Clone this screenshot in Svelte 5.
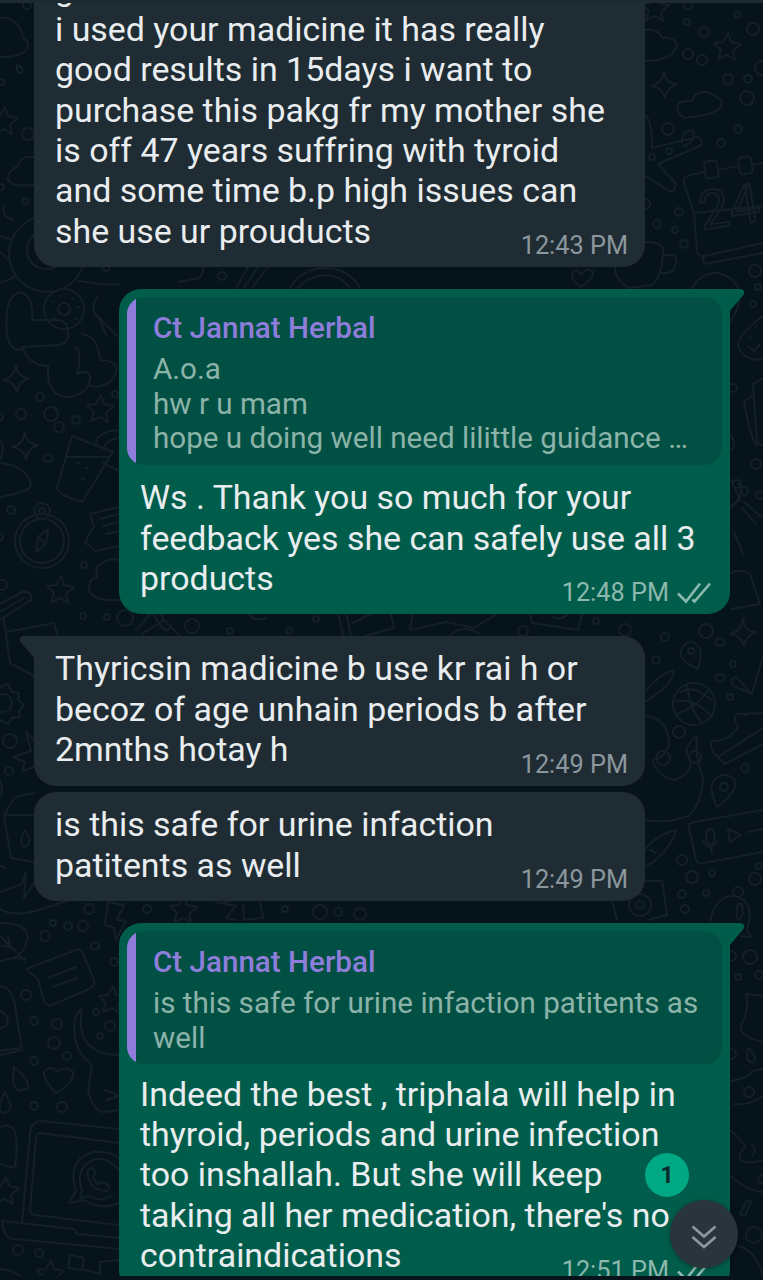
<script lang="ts">
	interface Quote {
		name: string;
		lines: string[];
	}

	interface Message {
		side: 'in' | 'out';
		lines: string[];
		time: string;
		tail?: boolean;
		compact?: boolean;
		quote?: Quote;
	}

	const messages: Message[] = [
		{
			side: 'in',
			lines: [
				'guidance',
				'i used your madicine it has really',
				'good results in 15days i want to',
				'purchase this pakg fr my mother she',
				'is off 47 years suffring with tyroid',
				'and some time b.p high issues can',
				'she use ur prouducts'
			],
			time: '12:43 PM'
		},
		{
			side: 'out',
			tail: true,
			quote: {
				name: 'Ct Jannat Herbal',
				lines: ['A.o.a', 'hw r u mam', 'hope u doing well need lilittle guidance …']
			},
			lines: ['Ws . Thank you so much for your', 'feedback yes she can safely use all 3', 'products'],
			time: '12:48 PM'
		},
		{
			side: 'in',
			tail: true,
			lines: ['Thyricsin madicine b use kr rai h or', 'becoz of age unhain periods b after', '2mnths hotay h'],
			time: '12:49 PM'
		},
		{
			side: 'in',
			lines: ['is this safe for urine infaction', 'patitents as well'],
			time: '12:49 PM'
		},
		{
			side: 'out',
			tail: true,
			compact: true,
			quote: {
				name: 'Ct Jannat Herbal',
				lines: ['is this safe for urine infaction patitents as', 'well']
			},
			lines: [
				'Indeed the best , triphala will help in',
				'thyroid, periods and urine infection',
				'too inshallah. But she will keep',
				"taking all her medication, there's no",
				'contraindications'
			],
			time: '12:51 PM'
		}
	];

	const unread = 1;

	// Wallpaper bubbles: x, y, radius
	const dots = [
		[27, 5, 4], [1, 82, 3], [28, 134, 6], [25, 201, 3], [1, 187, 3], [106, 268, 3], [222, 276, 4],
		[687, 22, 3], [704, 32, 5], [753, 29, 6], [737, 15, 3], [688, 5, 4], [688, 54, 5], [702, 60, 5],
		[728, 79, 5], [748, 79, 4], [762, 68, 7], [747, 98, 7], [668, 129, 6], [738, 129, 4], [721, 143, 4],
		[652, 157, 3], [669, 151, 3], [657, 224, 4], [675, 230, 3], [679, 212, 4], [684, 244, 4],
		[645, 204, 5], [755, 271, 6], [758, 287, 3], [753, 304, 3], [733, 388, 4], [756, 464, 5],
		[760, 495, 4], [40, 397, 4], [21, 414, 5], [51, 414, 7], [76, 420, 4], [59, 427, 5], [48, 458, 4],
		[115, 394, 3], [0, 417, 3], [11, 510, 4], [0, 537, 3], [84, 565, 3], [2, 585, 5], [83, 616, 3],
		[107, 617, 3], [125, 618, 8], [192, 626, 7], [230, 631, 3], [289, 631, 3], [316, 619, 3], [523, 631, 5],
		[596, 621, 3], [625, 630, 6], [665, 637, 4], [706, 631, 7], [720, 642, 4], [656, 660, 4],
		[733, 664, 3], [720, 678, 4], [730, 697, 3], [679, 732, 6], [745, 768, 4], [10, 741, 7],
		[9, 771, 4], [53, 923, 3], [68, 926, 4], [83, 926, 5], [45, 936, 5], [89, 909, 5], [147, 909, 4],
		[95, 946, 4], [114, 962, 4], [26, 995, 5], [34, 1021, 4], [57, 1024, 5], [54, 1043, 6],
		[67, 1056, 4], [34, 1061, 4], [34, 1106, 4], [62, 1107, 5], [96, 1012, 3], [110, 1026, 5],
		[100, 1036, 3], [18, 1250, 5], [39, 1253, 4], [285, 909, 3], [320, 912, 7], [338, 912, 4],
		[360, 914, 6], [682, 860, 5], [692, 877, 6], [712, 873, 3], [682, 894, 4], [706, 893, 3],
		[685, 909, 4], [755, 879, 6], [759, 866, 3], [750, 957, 7], [738, 977, 3],
		[759, 975, 4], [731, 956, 5], [731, 1054, 5], [754, 1235, 8], [762, 1179, 4]
	];

	const stars = [
		[4, 121], [727, 47], [100, 409], [60, 590], [183, 910], [112, 1000], [5, 1191], [655, 8], [50, 1274]
	];

	const sparkles = [
		[664, 85], [16, 379], [743, 633], [25, 446]
	];
</script>

{#snippet checks()}
	<svg class="checks" viewBox="0 0 36 24" aria-hidden="true">
		<path d="M1 12.500 9 20.500 23 2.500M15.500 18.500 17.500 20.500 33 2.500" />
	</svg>
{/snippet}

<div class="chat">
	<svg class="wallpaper" viewBox="0 0 763 1280" aria-hidden="true">
		{#each dots as [x, y, r]}
			<circle cx={x} cy={y} {r} />
		{/each}
		{#each stars as [x, y]}
			<path
				transform="translate({x} {y})"
				d="M1-14 4-5 14-3 6 4 8 13 0 8-9 12-6 3-13-4-4-5Z"
			/>
		{/each}
		{#each sparkles as [x, y]}
			<path
				transform="translate({x} {y})"
				d="M0-14Q1-2 13-1Q3 2 1 13Q-2 2-13 1Q-2-1 0-14Z"
			/>
		{/each}

		<!-- clouds and drops -->
		<path d="M0 18C12 16 22 26 23 38C35 45 26 58 0 57M34 157Q20 155 18 166Q6 172 8 180Q12 187 34 185" />
		<path d="M645 30Q659 28 662 38Q675 36 677 46Q672 61 645 61" />
		<path d="M679 103Q688 100 692 101Q695 91 706 92Q714 94 716 97Q724 99 721 107Q715 115 684 118Q674 112 679 103Z" />
		<path d="M17 65Q24 68 22 73Q16 74 17 65M14 1067Q30 1080 28 1088Q14 1095 13 1080ZM5 1092Q-2 1104 0 1111Q8 1116 11 1106Z" />
		<path d="M748 1048Q758 1057 754 1062Q744 1064 748 1048Z" />

		<!-- plane, calendar, mug, heart -->
		<path d="M645 115Q652 120 652 148L698 137Q705 141 700 146L658 164L676 184Q674 194 668 190L645 176M682 143Q681 131 693 130Q696 142 684 146" />
		<path d="M704 172L690 175Q682 177 684 183L694 213L697 250Q698 257 704 256L763 243M703 257L704 264 763 253M694 213L763 206M718 170L738 166M752 165L763 163" />
		<rect x="705" y="161" width="13" height="17" rx="3" transform="rotate(-8 711 170)" />
		<rect x="739" y="157" width="13" height="17" rx="3" transform="rotate(-8 745 166)" />
		<text x="702" y="230" transform="rotate(-9 702 230)">24</text>
		<path d="M645 242Q664 242 663 251Q662 277 652 285L630 288Q615 281 615 267M664 256Q678 252 676 263Q674 275 661 273M692 289Q700 272 718 273Q736 278 739 291Q742 304 730 322" />
		<path d="M581 287Q569 278 573 272Q578 268 581 275Q588 266 593 272Q594 278 581 287Z" />

		<!-- avocado, flower and plush on the left -->
		<circle cx="47" cy="254" r="38" />
		<circle cx="46" cy="250" r="19" />
		<circle cx="64" cy="309" r="20" />
		<circle cx="64" cy="309" r="6" />
		<path d="M52 302h1M60 296h1M72 299h1M78 307h1M75 319h1M66 324h1M54 318h1" />
		<path d="M0 283L15 277M0 252L9 260M0 236L12 240M4 206Q2 218 13 220M32 320Q34 296 20 292Q8 296 7 312Q4 344 16 350Q24 349 22 347L60 345Q70 342 68 332Q67 322 60 320H32M22 347Q30 366 48 366Q46 398 70 397Q91 392 90 376Q86 369 77 374Q83 352 75 347M48 366V373M79 281Q111 286 119 284M94 312L117 336M82 334Q98 336 100 360Q119 360 116 373Q109 389 90 386M98 296Q88 310 99 318L106 335" />
		<path d="M178 282L200 278 204 268M236 288L248 267M244 288L258 267M252 288L268 267M290 288Q302 268 325 268Q350 269 360 288M298 288Q308 276 325 275Q342 276 350 288" />

		<!-- cup, cake, compass -->
		<path d="M72 436L113 452L82 502Q58 495 57 488ZM68 457H110M77 463h2M86 468h2M82 479h2M119 430Q96 432 96 444M119 438Q105 440 104 448M119 471Q108 466 103 462M0 463Q28 466 31 486Q28 492 0 497M0 440Q6 448 0 459" />
		<circle cx="42" cy="541" r="27" />
		<circle cx="42" cy="541" r="22" />
		<circle cx="42" cy="511" r="8" />
		<circle cx="42" cy="511" r="3" />
		<path d="M48 529L38 537 36 552 46 544ZM38 537L46 544M119 507L90 514 94 526 85 542 95 551 119 546M119 514L100 519M103 526 119 522M106 534 119 531" />
		<path d="M119 560Q108 557 97 567Q96 575 97 577Q88 579 89 590Q94 602 119 600M0 604L22 592Q32 590 31 600L0 620M0 612L24 598M4 620L10 663 34 676M6 632L54 623 58 636" />
		<path d="M136 630L152 612Q156 604 164 620L142 634M153 612Q166 641 171 624M164 620L182 638M248 612Q254 623 266 618M338 612L344 640M346 612L351 636M353 623L374 612M391 614L394 628 365 636M413 612L410 630 447 622 474 628 500 612M450 636Q462 623 480 634M530 612L532 623 578 630 582 614M552 616Q560 622 568 614" />

		<!-- gear, carton, leaf, note -->
		<path d="M0 687L8 684 12 692 19 693 18 700 24 705 19 711 20 717 12 718 8 724 0 720" />
		<circle cx="3" cy="703" r="9" />
		<path d="M34 740L26 732 31 751 13 757 25 762 22 771 34 767" />
		<path d="M34 793L15 797 4 815 11 858 34 862M4 815H34M25 830Q18 842 24 847Q34 844 25 830ZM0 780Q4 790 0 798M0 866L6 868M0 892L22 884 26 872 24 898 36 880M0 909Q16 918 42 909L69 900M108 902L105 925 114 928 116 940 126 921 117 920 124 905ZM220 903L232 901M216 902L236 906 226 918 236 920M243 905L244 920 263 918 260 902" />
		<path d="M0 923Q26 922 28 937Q24 955 13 958L25 959M0 961L13 958M0 936L16 952M8 937L10 947 2 946M18 953L25 962" />
		<path d="M26 969L76 950Q81 948 83 954L94 980Q96 986 89 989L52 1005Q46 1006 44 1001L38 979ZM48 978L76 967M53 987L77 978" />
		<path d="M0 986Q11 988 14 1000L22 1050 0 1055M19 1048L0 1051M0 1011Q8 1015 8 1022Q6 1028 0 1028M82 1009Q72 1014 75 1038Q78 1055 92 1065L88 1091Q94 1112 104 1112L119 1110M82 1009Q74 1054 119 1055M105 1090L119 1096M106 1100L119 1096" />
		<path d="M56 1093Q43 1080 44 1072Q51 1064 58 1072Q66 1065 73 1072Q75 1082 56 1093Z" />

		<!-- laptop -->
		<path d="M119 1129L42 1121Q31 1121 30 1134L22 1223M119 1143L40 1133Q37 1133 36 1137L30 1211Q30 1214 35 1215L119 1225M2 1221L74 1229 77 1234 119 1238M2 1221Q4 1239 14 1239L119 1249" />
		<path d="M76 1191L69 1203 84 1200Q101 1211 119 1203M76 1191Q66 1160 93 1152Q111 1150 119 1159M82 1191Q74 1167 95 1159Q107 1157 118 1169M82 1191L80 1198 88 1196Q100 1203 112 1196M92 1167Q86 1170 88 1177Q92 1191 107 1191L110 1186 102 1182 98 1185 93 1178 96 1173Z" />
		<path d="M0 1127Q14 1122 16 1136Q18 1158 14 1168L0 1164M70 1255L84 1258 82 1270 68 1268ZM84 1270 98 1273M100 1262 118 1260M100 1262V1277M0 1269Q16 1270 24 1280" />

		<!-- right edge -->
		<path d="M763 316Q738 335 738 345Q742 359 758 360L763 358M748 346L754 351 760 344M749 338h1M756 326h1M763 378L753 384 757 442 763 446M753 395L744 402Q751 440 757 446M731 435Q738 450 730 450M731 480L740 500 732 505M731 508Q748 490 738 484M744 502L763 518M742 508L756 524" />
		<circle cx="737" cy="484" r="4" />
		<circle cx="744" cy="491" r="4" />
		<path d="M731 573Q740 568 750 574L760 604 731 609M740 546L743 554 733 530" />
		<circle cx="691" cy="651" r="3" />
		<path d="M698 669Q678 660 681 650Q690 634 700 649Q702 656 698 669Z" />
		<circle cx="694" cy="704" r="21" />
		<path d="M676 714Q696 708 708 690M674 701Q696 698 712 717M687 685Q691 714 703 723M680 692Q694 684 711 700M645 702Q674 684 674 670Q659 674 645 692M645 716Q668 718 669 744Q665 758 652 760Q658 777 675 780Q698 770 687 754Q684 746 697 736Q694 752 703 778Q702 804 688 816Q666 824 645 820" />
		<circle cx="663" cy="758" r="7" />
		<circle cx="695" cy="757" r="6" />
		<path d="M763 656L752 694 736 677Q728 680 734 686L752 694M763 713L737 714Q732 718 738 727Q730 741 712 741Q709 745 714 753L725 764 763 744M718 757L763 728M745 715h3M754 714h3" />
		<circle cx="724" cy="787" r="4" />
		<path d="M717 807Q708 788 714 780Q724 770 735 780Q738 792 717 807Z" />
		<path d="M763 810L694 822Q688 823 689 828L696 860Q698 865 704 863L763 852M707 830Q714 826 715 838Q711 850 706 840ZM703 841Q710 853 718 840M711 848L712 853M728 829L741 835 730 842ZM748 832L763 829" />
		<path d="M645 850Q654 836 676 830Q670 852 645 867M650 850L656 853M645 881L662 881 667 915 648 920M612 900L617 920" />
		<circle cx="640" cy="905" r="11" />
		<circle cx="640" cy="905" r="4" />
		<circle cx="738" cy="892" r="5" />
		<path d="M710 921Q716 895 734 896Q756 900 747 930L751 937 740 936M738 904Q734 919 740 920Q744 914 742 904Z" />
		<path d="M763 996L746 994Q750 1010 741 1025Q738 1036 763 1042M731 1081Q749 1078 752 1071L763 1069M734 1104Q749 1106 763 1096M730 1130Q744 1142 745 1147Q738 1154 740 1160Q748 1165 763 1160M752 1145Q758 1151 752 1156M730 1176Q750 1192 763 1192M747 1201L740 1214 745 1216 751 1202ZM738 1246Q756 1250 763 1276" />
		<circle cx="749" cy="1092" r="5" />
	</svg>

	<div class="messages">
		{#each messages as message}
			<div class="bubble {message.side}" class:tail={message.tail} class:compact={message.compact}>
				{#if message.tail}
					<svg class="tail-shape" viewBox="0 0 16 24" aria-hidden="true">
						<path d="M0 0H12Q17.5 2 14 6.500L0 23Z" />
					</svg>
				{/if}
				{#if message.quote}
					<div class="quote">
						<div class="quote-name">{message.quote.name}</div>
						{#each message.quote.lines as line}
							<div class="quote-line">{line}</div>
						{/each}
					</div>
				{/if}
				<div class="body">
					<div class="text">
						{#each message.lines as line}
							<div>{line}</div>
						{/each}
					</div>
					<div class="meta">
						<span>{message.time}</span>
						{#if message.side === 'out'}
							{@render checks()}
						{/if}
					</div>
				</div>
			</div>
		{/each}
	</div>

	<div class="top-bar"></div>
	<div class="bottom-bar"></div>

	<button type="button" class="scroll-down" aria-label="Scroll to latest">
		<svg viewBox="0 0 28 26" aria-hidden="true">
			<path d="M2.500 2.500 14 12.500 25.500 2.500M2.500 13 14 23 25.500 13" />
		</svg>
	</button>
	<span class="unread">{unread}</span>
</div>

<style>
	:global(body) {
		background: #07131a;
		overflow: hidden;
	}

	.chat {
		position: relative;
		display: flex;
		flex-direction: column;
		width: 763px;
		height: 1280px;
		overflow: hidden;
		background: #07131a;
		font-family: Roboto, 'Liberation Sans', sans-serif;
	}

	.wallpaper {
		position: absolute;
		inset: 0;
		fill: none;
		stroke: #132026;
		stroke-width: 2;
		stroke-linecap: round;
		stroke-linejoin: round;
	}

	.wallpaper text {
		font-size: 54px;
	}

	.top-bar,
	.bottom-bar {
		position: absolute;
		left: 0;
		right: 0;
		top: 0;
		height: 3px;
		background: #1e2a31;
	}

	.bottom-bar {
		top: auto;
		bottom: 0;
		height: 4px;
		background: #07131a;
	}

	/* The list is scrolled, so its first bubble starts above the window */
	.messages {
		position: relative;
		display: flex;
		flex-direction: column;
		padding: 0 33px 0 34px;
		margin-top: -44px;
	}

	.bubble {
		position: relative;
		flex-shrink: 0;
		width: 611px;
		box-sizing: border-box;
		margin-top: 6.500px;
		border-radius: 22px;
		background: #202c33;
		color: #e9edef;
	}

	.bubble:first-child {
		margin-top: 0;
	}

	.bubble.tail {
		margin-top: 21.700px;
	}

	.bubble.in.tail {
		border-top-left-radius: 0;
	}

	.bubble.out {
		align-self: flex-end;
		padding-top: 8px;
		border-top-right-radius: 0;
		background: #005d4b;
	}

	.tail-shape {
		position: absolute;
		top: 0;
		left: calc(100% - 1px);
		width: 16px;
		height: 24px;
		fill: #005d4b;
	}

	.in .tail-shape {
		left: auto;
		right: calc(100% - 1px);
		fill: #202c33;
		transform: scaleX(-1);
	}

	.quote {
		box-sizing: border-box;
		margin: 0 8px;
		padding: 12px 10px 9px 26px;
		border-radius: 17px;
		background: linear-gradient(to right, #8f7ddb 9px, #025043 9px);
	}

	.quote-name {
		height: 43px;
		font-size: 29.600px;
		line-height: 38px;
		font-weight: 500;
		color: #8f7ddb;
	}

	.quote-line {
		height: 34.700px;
		font-size: 29.600px;
		line-height: 34.700px;
		color: #8cb3a9;
		white-space: nowrap;
	}

	.body {
		display: grid;
		padding: 13.300px 17px 15px 21px;
	}

	.compact .body {
		margin-top: -3px;
	}

	.text,
	.meta {
		grid-area: 1 / 1;
	}

	.text {
		font-size: 33.900px;
		line-height: 40.400px;
		white-space: nowrap;
	}

	.meta {
		display: flex;
		align-items: center;
		gap: 8px;
		place-self: end;
		margin-bottom: -10px;
		font-size: 25.300px;
		line-height: 32px;
		color: #8b979e;
	}

	.out .meta {
		color: #8cb8ad;
	}

	.checks {
		width: 36px;
		height: 24px;
		fill: none;
		stroke: #8cb8ad;
		stroke-width: 2.600;
	}

	.scroll-down {
		position: absolute;
		left: 670px;
		top: 1200px;
		display: grid;
		place-items: center;
		width: 68px;
		height: 68px;
		padding: 5px 0 0;
		border: none;
		border-radius: 50%;
		background: #2a343b;
		box-shadow: 0 1px 4px rgba(0, 0, 0, 0.35);
	}

	.scroll-down svg {
		width: 28px;
		height: 26px;
		fill: none;
		stroke: #8d989f;
		stroke-width: 2.600;
	}

	.unread {
		position: absolute;
		left: 645px;
		top: 1153px;
		width: 44px;
		height: 44px;
		border-radius: 50%;
		background: #00a884;
		color: #0b2a2b;
		font-size: 23px;
		font-weight: 700;
		line-height: 46px;
		text-align: center;
	}
</style>
